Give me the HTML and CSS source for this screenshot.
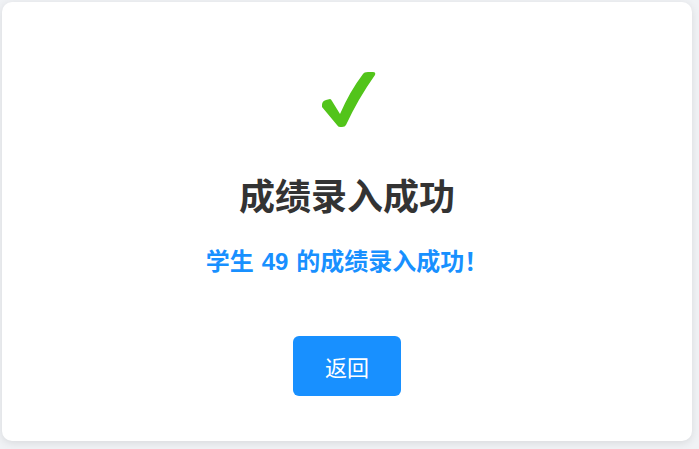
FILE: index.html
```html
<!DOCTYPE html>
<html lang="zh">
<head>
<meta charset="utf-8">
<link rel="stylesheet" href="styles.css">
</head>
<body>
<div class="card">
  <svg class="icon" viewBox="0 0 56 56" width="56" height="56" aria-hidden="true">
    <path d="M2 34 Q2 30 6 29 L10 28 Q11 28 12 30 L20 43 Q30 20 43 3 Q44 1 48 1 L53 1 Q56 1 55 4 Q38 28 26 54 Q25 56 22 56 L20 56 Q18 56 17 54 L2 36 Z" fill="#52c41a"/>
  </svg>
  <h1 class="title">成绩录入成功</h1>
  <p class="msg">学生<span class="num">49</span>的成绩录入成功！</p>
  <button class="btn">返回</button>
</div>
</body>
</html>
```
FILE: styles.css
```css
html, body {
  margin: 0;
  padding: 0;
  background: #f0f2f5;
}
body {
  padding: 2px 7px 8px 2px;
  font-family: "Liberation Sans", Arial, "Noto Sans CJK SC", sans-serif;
}
.card {
  width: 690px;
  height: 439px;
  box-sizing: border-box;
  background: #fff;
  border-radius: 10px;
  box-shadow: 0 2px 8px rgba(0, 0, 0, 0.1);
  display: flex;
  flex-direction: column;
  align-items: center;
  padding-top: 69px;
}
.icon {
  display: block;
  margin-left: 2px;
}
.title {
  margin: 49px 0 0;
  font-size: 36px;
  line-height: 44px;
  font-weight: bold;
  color: #333;
}
.msg {
  margin: 27px 0 0;
  font-size: 24px;
  line-height: 30px;
  font-weight: bold;
  color: #1890ff;
}
.num {
  margin: 0 8px;
}
.btn {
  margin-top: 59px;
  width: 108px;
  height: 60px;
  border: none;
  border-radius: 6px;
  background: #1890ff;
  color: #fff;
  font-family: "Noto Sans CJK SC", sans-serif;
  font-size: 22px;
}
```
